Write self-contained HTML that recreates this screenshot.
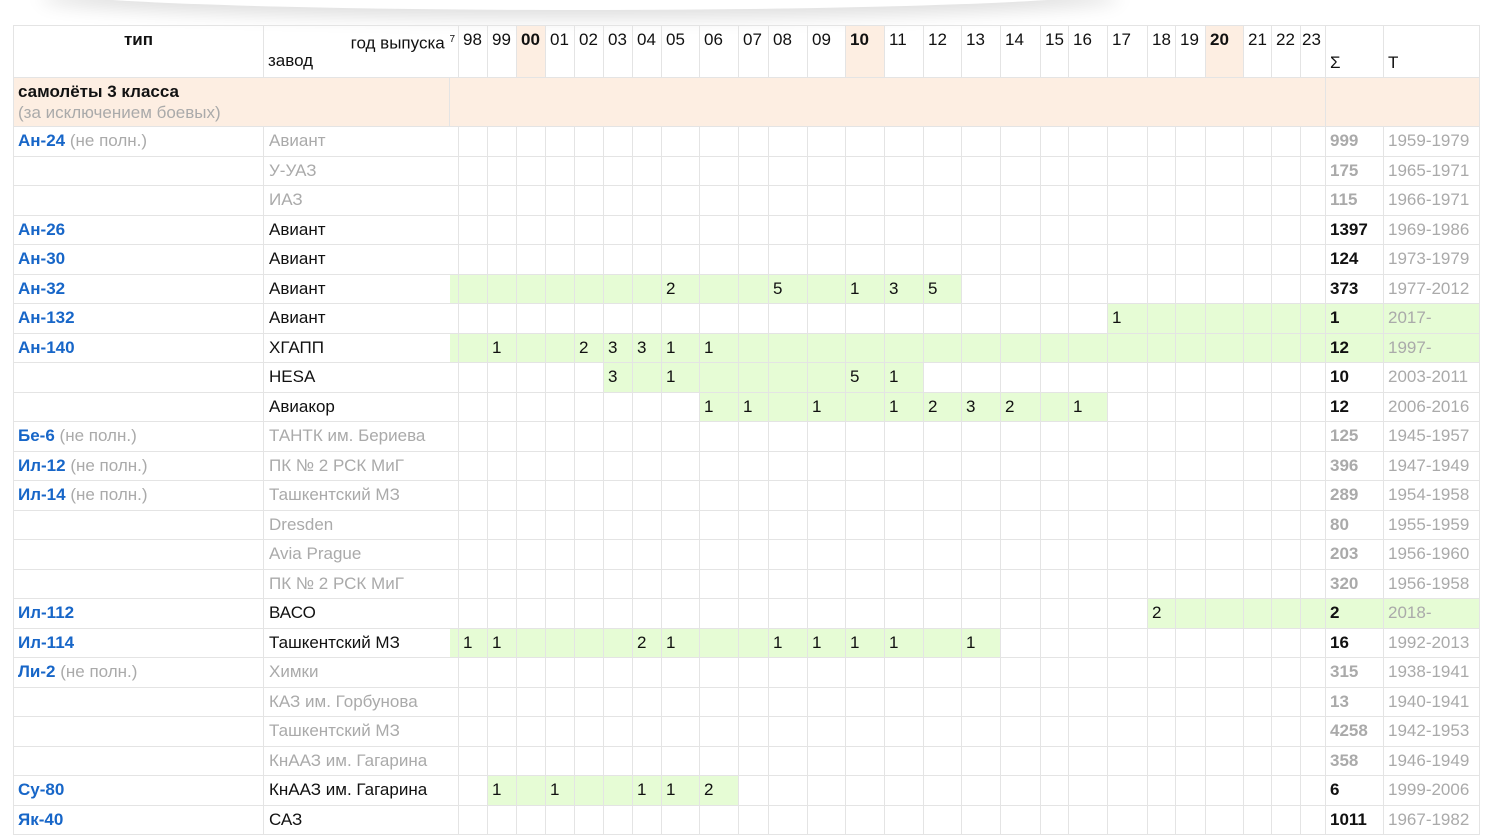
<!DOCTYPE html>
<html><head><meta charset="utf-8"><style>
body{margin:0;background:#fff;width:1502px;height:831px;overflow:hidden;position:relative;font-family:"Liberation Sans",sans-serif;font-size:17px;color:#111}
.sh{position:absolute;left:40px;top:-30px;width:1080px;height:40px;border-radius:50%;box-shadow:0 8px 18px rgba(0,0,0,.13);background:#fff}
table{position:absolute;left:13px;top:25px;border-collapse:collapse;table-layout:fixed;width:1466px}
td{border:1px solid #e4e4e4;padding:0 0 0 4px;white-space:nowrap;overflow:visible;height:28.5px;vertical-align:middle;box-sizing:border-box}
.f{border-right:hidden;padding-left:5px}
.s{padding:0}
.g{background:#e6fcd5}
.hd td{height:52px;vertical-align:top;padding-top:4px;line-height:20px}
.p{background:#fdeee2}
.l{color:#1766c8;font-weight:bold;text-decoration:none}
.q{color:#aaa}
.n{font-weight:bold}
.nq{font-weight:bold;color:#aaa}
.y{color:#aaa}
td.c{height:49px;background:#fdeee2;vertical-align:middle;line-height:21px}
tr.b td{height:29.5px}
</style></head><body>
<div class="sh"></div>
<table>
<colgroup><col style="width:250px"><col style="width:186px"><col style="width:9px">
<col style="width:29px"><col style="width:29px"><col style="width:29px"><col style="width:29px"><col style="width:29px"><col style="width:29px"><col style="width:29px"><col style="width:38px"><col style="width:39px"><col style="width:30px"><col style="width:39px"><col style="width:38px"><col style="width:39px"><col style="width:39px"><col style="width:38px"><col style="width:39px"><col style="width:40px"><col style="width:28px"><col style="width:39px"><col style="width:40px"><col style="width:28px"><col style="width:30px"><col style="width:38px"><col style="width:28px"><col style="width:29px"><col style="width:25px">
<col style="width:58px"><col style="width:96px"></colgroup>
<tr class="hd"><td style="text-align:center;font-weight:bold;padding-left:0">тип</td><td colspan="2" style="position:relative;padding-left:4px"><div style="text-align:right;padding-right:3px">год выпуска <sup style="font-size:10px">7</sup></div><div style="position:absolute;left:4px;top:25px">завод</div></td><td>98</td><td>99</td><td class="p"><b>00</b></td><td>01</td><td>02</td><td>03</td><td>04</td><td>05</td><td>06</td><td>07</td><td>08</td><td>09</td><td class="p"><b>10</b></td><td>11</td><td>12</td><td>13</td><td>14</td><td>15</td><td>16</td><td>17</td><td>18</td><td>19</td><td class="p"><b>20</b></td><td>21</td><td>22</td><td style="padding-left:1px">23</td><td style="vertical-align:bottom;padding-bottom:4px">Σ</td><td style="vertical-align:bottom;padding-bottom:4px">Т</td></tr>
<tr><td class="c" colspan="2" style="border-right:1px solid #e4e4e4"><b>самолёты 3 класса</b><br><span class="q">(за исключением боевых)</span></td><td class="c" colspan="27"></td><td class="c" colspan="2"></td></tr>
<tr class="b"><td><span class="l">Ан-24</span> <span class="q">(не полн.)</span></td><td class="f q">Авиант</td><td class="s"></td><td></td><td></td><td></td><td></td><td></td><td></td><td></td><td></td><td></td><td></td><td></td><td></td><td></td><td></td><td></td><td></td><td></td><td></td><td></td><td></td><td></td><td></td><td></td><td></td><td></td><td></td><td class="nq">999</td><td class="y">1959-1979</td></tr>
<tr class="b"><td></td><td class="f q">У-УАЗ</td><td class="s"></td><td></td><td></td><td></td><td></td><td></td><td></td><td></td><td></td><td></td><td></td><td></td><td></td><td></td><td></td><td></td><td></td><td></td><td></td><td></td><td></td><td></td><td></td><td></td><td></td><td></td><td></td><td class="nq">175</td><td class="y">1965-1971</td></tr>
<tr class="b"><td></td><td class="f q">ИАЗ</td><td class="s"></td><td></td><td></td><td></td><td></td><td></td><td></td><td></td><td></td><td></td><td></td><td></td><td></td><td></td><td></td><td></td><td></td><td></td><td></td><td></td><td></td><td></td><td></td><td></td><td></td><td></td><td></td><td class="nq">115</td><td class="y">1966-1971</td></tr>
<tr class="b"><td><span class="l">Ан-26</span></td><td class="f">Авиант</td><td class="s"></td><td></td><td></td><td></td><td></td><td></td><td></td><td></td><td></td><td></td><td></td><td></td><td></td><td></td><td></td><td></td><td></td><td></td><td></td><td></td><td></td><td></td><td></td><td></td><td></td><td></td><td></td><td class="n">1397</td><td class="y">1969-1986</td></tr>
<tr class="b"><td><span class="l">Ан-30</span></td><td class="f">Авиант</td><td class="s"></td><td></td><td></td><td></td><td></td><td></td><td></td><td></td><td></td><td></td><td></td><td></td><td></td><td></td><td></td><td></td><td></td><td></td><td></td><td></td><td></td><td></td><td></td><td></td><td></td><td></td><td></td><td class="n">124</td><td class="y">1973-1979</td></tr>
<tr class="b"><td><span class="l">Ан-32</span></td><td class="f">Авиант</td><td class="s g"></td><td class="g"></td><td class="g"></td><td class="g"></td><td class="g"></td><td class="g"></td><td class="g"></td><td class="g"></td><td class="g">2</td><td class="g"></td><td class="g"></td><td class="g">5</td><td class="g"></td><td class="g">1</td><td class="g">3</td><td class="g">5</td><td></td><td></td><td></td><td></td><td></td><td></td><td></td><td></td><td></td><td></td><td></td><td class="n">373</td><td class="y">1977-2012</td></tr>
<tr class="b"><td><span class="l">Ан-132</span></td><td class="f">Авиант</td><td class="s"></td><td></td><td></td><td></td><td></td><td></td><td></td><td></td><td></td><td></td><td></td><td></td><td></td><td></td><td></td><td></td><td></td><td></td><td></td><td></td><td class="g">1</td><td class="g"></td><td class="g"></td><td class="g"></td><td class="g"></td><td class="g"></td><td class="g"></td><td class="n g">1</td><td class="y g">2017-</td></tr>
<tr class="b"><td><span class="l">Ан-140</span></td><td class="f">ХГАПП</td><td class="s g"></td><td class="g"></td><td class="g">1</td><td class="g"></td><td class="g"></td><td class="g">2</td><td class="g">3</td><td class="g">3</td><td class="g">1</td><td class="g">1</td><td class="g"></td><td class="g"></td><td class="g"></td><td class="g"></td><td class="g"></td><td class="g"></td><td class="g"></td><td class="g"></td><td class="g"></td><td class="g"></td><td class="g"></td><td class="g"></td><td class="g"></td><td class="g"></td><td class="g"></td><td class="g"></td><td class="g"></td><td class="n g">12</td><td class="y g">1997-</td></tr>
<tr class="b"><td></td><td class="f">HESA</td><td class="s"></td><td></td><td></td><td></td><td></td><td></td><td class="g">3</td><td class="g"></td><td class="g">1</td><td class="g"></td><td class="g"></td><td class="g"></td><td class="g"></td><td class="g">5</td><td class="g">1</td><td></td><td></td><td></td><td></td><td></td><td></td><td></td><td></td><td></td><td></td><td></td><td></td><td class="n">10</td><td class="y">2003-2011</td></tr>
<tr class="b"><td></td><td class="f">Авиакор</td><td class="s"></td><td></td><td></td><td></td><td></td><td></td><td></td><td></td><td></td><td class="g">1</td><td class="g">1</td><td class="g"></td><td class="g">1</td><td class="g"></td><td class="g">1</td><td class="g">2</td><td class="g">3</td><td class="g">2</td><td class="g"></td><td class="g">1</td><td></td><td></td><td></td><td></td><td></td><td></td><td></td><td class="n">12</td><td class="y">2006-2016</td></tr>
<tr class="b"><td><span class="l">Бе-6</span> <span class="q">(не полн.)</span></td><td class="f q">ТАНТК им. Бериева</td><td class="s"></td><td></td><td></td><td></td><td></td><td></td><td></td><td></td><td></td><td></td><td></td><td></td><td></td><td></td><td></td><td></td><td></td><td></td><td></td><td></td><td></td><td></td><td></td><td></td><td></td><td></td><td></td><td class="nq">125</td><td class="y">1945-1957</td></tr>
<tr class="b"><td><span class="l">Ил-12</span> <span class="q">(не полн.)</span></td><td class="f q">ПК № 2 РСК МиГ</td><td class="s"></td><td></td><td></td><td></td><td></td><td></td><td></td><td></td><td></td><td></td><td></td><td></td><td></td><td></td><td></td><td></td><td></td><td></td><td></td><td></td><td></td><td></td><td></td><td></td><td></td><td></td><td></td><td class="nq">396</td><td class="y">1947-1949</td></tr>
<tr class="b"><td><span class="l">Ил-14</span> <span class="q">(не полн.)</span></td><td class="f q">Ташкентский МЗ</td><td class="s"></td><td></td><td></td><td></td><td></td><td></td><td></td><td></td><td></td><td></td><td></td><td></td><td></td><td></td><td></td><td></td><td></td><td></td><td></td><td></td><td></td><td></td><td></td><td></td><td></td><td></td><td></td><td class="nq">289</td><td class="y">1954-1958</td></tr>
<tr class="b"><td></td><td class="f q">Dresden</td><td class="s"></td><td></td><td></td><td></td><td></td><td></td><td></td><td></td><td></td><td></td><td></td><td></td><td></td><td></td><td></td><td></td><td></td><td></td><td></td><td></td><td></td><td></td><td></td><td></td><td></td><td></td><td></td><td class="nq">80</td><td class="y">1955-1959</td></tr>
<tr class="b"><td></td><td class="f q">Avia Prague</td><td class="s"></td><td></td><td></td><td></td><td></td><td></td><td></td><td></td><td></td><td></td><td></td><td></td><td></td><td></td><td></td><td></td><td></td><td></td><td></td><td></td><td></td><td></td><td></td><td></td><td></td><td></td><td></td><td class="nq">203</td><td class="y">1956-1960</td></tr>
<tr class="b"><td></td><td class="f q">ПК № 2 РСК МиГ</td><td class="s"></td><td></td><td></td><td></td><td></td><td></td><td></td><td></td><td></td><td></td><td></td><td></td><td></td><td></td><td></td><td></td><td></td><td></td><td></td><td></td><td></td><td></td><td></td><td></td><td></td><td></td><td></td><td class="nq">320</td><td class="y">1956-1958</td></tr>
<tr class="b"><td><span class="l">Ил-112</span></td><td class="f">ВАСО</td><td class="s"></td><td></td><td></td><td></td><td></td><td></td><td></td><td></td><td></td><td></td><td></td><td></td><td></td><td></td><td></td><td></td><td></td><td></td><td></td><td></td><td></td><td class="g">2</td><td class="g"></td><td class="g"></td><td class="g"></td><td class="g"></td><td class="g"></td><td class="n g">2</td><td class="y g">2018-</td></tr>
<tr class="b"><td><span class="l">Ил-114</span></td><td class="f">Ташкентский МЗ</td><td class="s g"></td><td class="g">1</td><td class="g">1</td><td class="g"></td><td class="g"></td><td class="g"></td><td class="g"></td><td class="g">2</td><td class="g">1</td><td class="g"></td><td class="g"></td><td class="g">1</td><td class="g">1</td><td class="g">1</td><td class="g">1</td><td class="g"></td><td class="g">1</td><td></td><td></td><td></td><td></td><td></td><td></td><td></td><td></td><td></td><td></td><td class="n">16</td><td class="y">1992-2013</td></tr>
<tr class="b"><td><span class="l">Ли-2</span> <span class="q">(не полн.)</span></td><td class="f q">Химки</td><td class="s"></td><td></td><td></td><td></td><td></td><td></td><td></td><td></td><td></td><td></td><td></td><td></td><td></td><td></td><td></td><td></td><td></td><td></td><td></td><td></td><td></td><td></td><td></td><td></td><td></td><td></td><td></td><td class="nq">315</td><td class="y">1938-1941</td></tr>
<tr class="b"><td></td><td class="f q">КАЗ им. Горбунова</td><td class="s"></td><td></td><td></td><td></td><td></td><td></td><td></td><td></td><td></td><td></td><td></td><td></td><td></td><td></td><td></td><td></td><td></td><td></td><td></td><td></td><td></td><td></td><td></td><td></td><td></td><td></td><td></td><td class="nq">13</td><td class="y">1940-1941</td></tr>
<tr class="b"><td></td><td class="f q">Ташкентский МЗ</td><td class="s"></td><td></td><td></td><td></td><td></td><td></td><td></td><td></td><td></td><td></td><td></td><td></td><td></td><td></td><td></td><td></td><td></td><td></td><td></td><td></td><td></td><td></td><td></td><td></td><td></td><td></td><td></td><td class="nq">4258</td><td class="y">1942-1953</td></tr>
<tr class="b"><td></td><td class="f q">КнААЗ им. Гагарина</td><td class="s"></td><td></td><td></td><td></td><td></td><td></td><td></td><td></td><td></td><td></td><td></td><td></td><td></td><td></td><td></td><td></td><td></td><td></td><td></td><td></td><td></td><td></td><td></td><td></td><td></td><td></td><td></td><td class="nq">358</td><td class="y">1946-1949</td></tr>
<tr class="b"><td><span class="l">Су-80</span></td><td class="f">КнААЗ им. Гагарина</td><td class="s"></td><td></td><td class="g">1</td><td class="g"></td><td class="g">1</td><td class="g"></td><td class="g"></td><td class="g">1</td><td class="g">1</td><td class="g">2</td><td></td><td></td><td></td><td></td><td></td><td></td><td></td><td></td><td></td><td></td><td></td><td></td><td></td><td></td><td></td><td></td><td></td><td class="n">6</td><td class="y">1999-2006</td></tr>
<tr class="b"><td><span class="l">Як-40</span></td><td class="f">САЗ</td><td class="s"></td><td></td><td></td><td></td><td></td><td></td><td></td><td></td><td></td><td></td><td></td><td></td><td></td><td></td><td></td><td></td><td></td><td></td><td></td><td></td><td></td><td></td><td></td><td></td><td></td><td></td><td></td><td class="n">1011</td><td class="y">1967-1982</td></tr>
</table>
</body></html>
